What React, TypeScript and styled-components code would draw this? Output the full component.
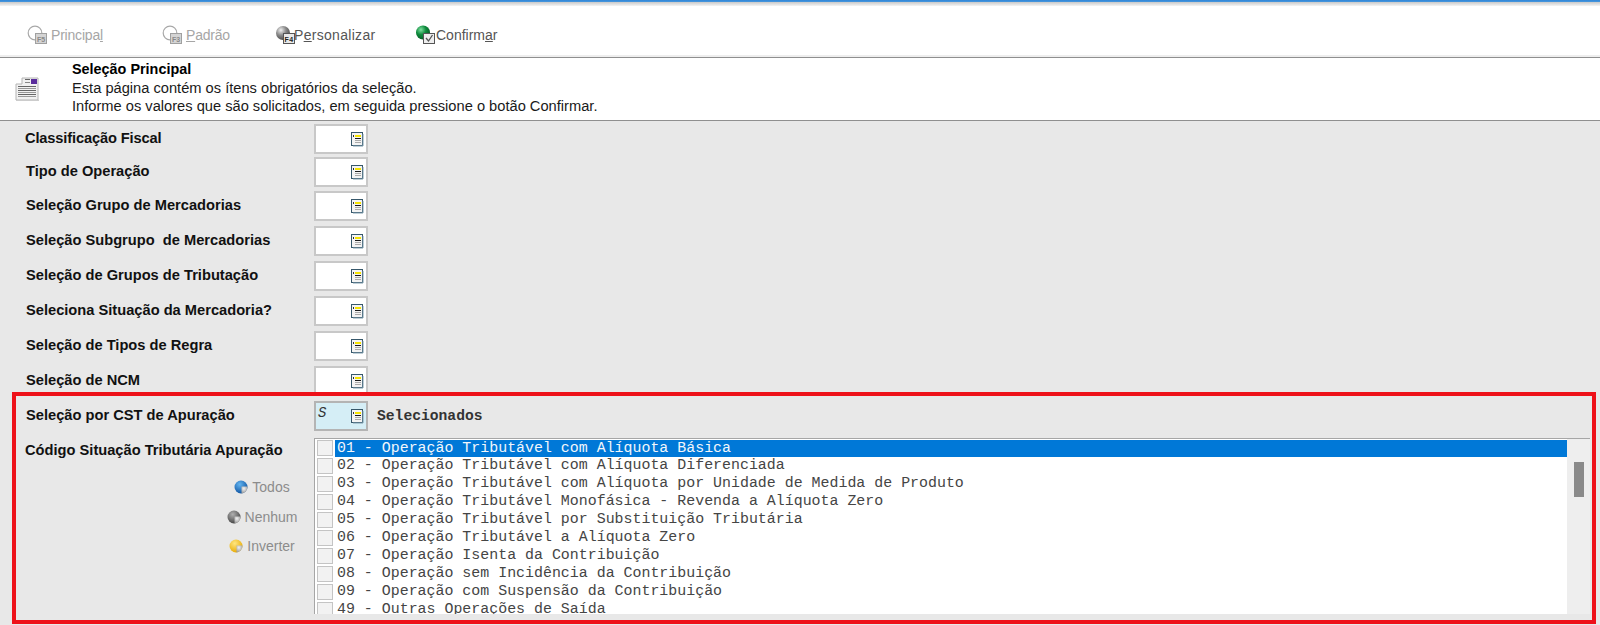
import React from "react";
import styled, { createGlobalStyle } from "styled-components";

const Global = createGlobalStyle`
  html, body { margin: 0; padding: 0; background: #e8e8e8; }
  body { font-family: "Liberation Sans", Arial, sans-serif; overflow: hidden; }
`;

const Page = styled.div`
  position: relative;
  width: 1600px;
  height: 625px;
  overflow: hidden;
  background: #e8e8e8;
`;

const TopStripe = styled.div`
  height: 6px;
  background: linear-gradient(#2f86d8 0, #4a97dc 2px, #c9c9c9 2px, #f4f4f4 6px);
`;

const Toolbar = styled.div`
  height: 49px;
  background: #fff;
  display: flex;
  align-items: center;
  padding: 9px 0 0 27px;
  box-sizing: border-box;
`;

const ToolButton = styled.div<{ $w: number; $off?: boolean; $ls?: number }>`
  width: ${(p) => p.$w}px;
  display: flex;
  align-items: center;
  font-size: 14px;
  letter-spacing: ${(p) => p.$ls ?? -0.2}px;
  color: ${(p) => (p.$off ? "#a6a6a6" : "#555")};
  u { text-underline-offset: 1px; }
`;

const ToolLabel = styled.span<{ $gap?: number }>`
  margin-left: ${(p) => p.$gap ?? 3}px;
`;

const HeaderBand = styled.div`
  height: 66px;
  background: #fff;
  box-sizing: border-box;
  border-top: 3px solid;
  border-image: linear-gradient(#eee 0, #eee 2px, #8f8f8f 2px) 3;
  border-bottom: 1px solid #8f8f8f;
  display: flex;
`;

const HeaderIconBox = styled.div`
  width: 72px;
  padding: 18px 0 0 15px;
  box-sizing: border-box;
`;

const HeaderText = styled.div`
  font-size: 14.67px;
  line-height: 18px;
  color: #1a1a1a;
  padding-top: 2px;
`;

const HeaderTitle = styled.div`
  font-weight: 700;
  font-size: 14.4px;
  color: #000;
  margin-bottom: 1px;
`;

const Body = styled.div`
  padding: 3px 0 0 0;
`;

const Row = styled.div<{ $h: number }>`
  height: ${(p) => p.$h}px;
  display: flex;
  align-items: flex-start;
`;

const Label = styled.div<{ $x?: number; $ls?: number }>`
  width: 314px;
  box-sizing: border-box;
  padding: 6px 0 0 ${(p) => p.$x ?? 26}px;
  font-size: 14.67px;
  line-height: 16px;
  font-weight: 700;
  letter-spacing: ${(p) => p.$ls ?? 0}px;
  color: #111;
  white-space: pre;
`;

const Field = styled.div<{ $on?: boolean }>`
  width: 54px;
  height: 30px;
  box-sizing: border-box;
  border: 2px solid ${(p) => (p.$on ? "#b4b4b4" : "#c8c8c8")};
  background: ${(p) => (p.$on ? "#d5eef6" : "#fff")};
  display: flex;
  justify-content: space-between;
  align-items: center;
  padding: 0 2px 0 2px;
`;

const FieldValue = styled.span`
  font-family: "Liberation Mono", monospace;
  font-size: 14px;
  font-style: italic;
  color: #333;
  margin-top: -6px;
`;

const FieldIconSlot = styled.span`
  margin-left: auto;
  display: flex;
`;

const ValueText = styled.div`
  margin-left: 9px;
  padding-top: 6px;
  font-family: "Liberation Mono", monospace;
  font-size: 14.67px;
  font-weight: 700;
  line-height: 18px;
  color: #333;
`;

const ListSection = styled.div`
  display: flex;
  align-items: flex-start;
`;

const LeftColumn = styled.div`
  width: 314px;
`;

const ListLabel = styled(Label)`
  padding-top: 0;
  margin-top: 4px;
  width: 314px;
`;

const ActionStack = styled.div`
  display: flex;
  flex-direction: column;
  align-items: center;
  width: 96px;
  margin: 21px 0 0 214px;
  gap: 13.5px;
`;

const ActionButton = styled.div`
  display: flex;
  align-items: center;
  gap: 4px;
  height: 16px;
  font-size: 14px;
  color: #8c8c8c;
`;

const ListBox = styled.div`
  width: 1276px;
  height: 176px;
  display: flex;
  box-sizing: border-box;
  border-top: 1px solid #a6a6a6;
  border-left: 1px solid #a6a6a6;
  background: #fff;
  overflow: hidden;
`;

const ListRows = styled.div`
  width: 1252px;
`;

const ListRow = styled.div`
  height: 18px;
  display: flex;
  align-items: stretch;
`;

const Check = styled.div`
  width: 16px;
  height: 16px;
  margin: 1px 2px 0 2px;
  flex: none;
  box-sizing: border-box;
  border: 1px solid #c4c4c4;
  background: #f2f2f2;
`;

const RowText = styled.div<{ $sel?: boolean }>`
  flex: 1;
  margin-top: ${(p) => (p.$sel ? 1 : 0)}px;
  height: ${(p) => (p.$sel ? 17 : 18)}px;
  padding-left: 2px;
  font-family: "Liberation Mono", monospace;
  font-size: 14.93px;
  line-height: 17px;
  white-space: pre;
  color: ${(p) => (p.$sel ? "#f2f6fb" : "#454545")};
  background: ${(p) => (p.$sel ? "#0078d7" : "transparent")};
`;

const ScrollTrack = styled.div`
  width: 23px;
  background: #eeeeee;
  padding: 23px 6px 0 7px;
  box-sizing: border-box;
`;

const ScrollThumb = styled.div`
  width: 10px;
  height: 35px;
  background: #8a8a8a;
`;

const RedFrame = styled.div`
  position: absolute;
  left: 12px;
  top: 392px;
  width: 1584px;
  height: 232px;
  box-sizing: border-box;
  border: 4px solid #ee1119;
  pointer-events: none;
`;

const ListIcon = () => (
  <svg width="13" height="15" viewBox="0 0 13 15">
    <rect x="0.5" y="0.5" width="11" height="13" fill="#f4f4f4" stroke="#36576a" />
    <path d="M12 2v12H2" fill="none" stroke="#7d9bab" />
    <rect x="4" y="3" width="6" height="2" fill="#f6e400" />
    <rect x="2" y="3" width="1" height="2" fill="#333" />
    <rect x="4" y="6" width="6" height="1" fill="#1a1a1a" />
    <rect x="4" y="8" width="6" height="1" fill="#aaa" />
    <rect x="4" y="10" width="6" height="1" fill="#aaa" />
  </svg>
);

const PageIcon = () => (
  <svg width="25" height="26" viewBox="0 0 25 26">
    <path d="M1 8h6V2h16v22H1z" fill="#f1f1f1" stroke="#b4b4b4" />
    <rect x="16" y="3" width="6" height="5" fill="#5a2c9c" />
    <rect x="10" y="3" width="5" height="1" fill="#666" />
    <rect x="10" y="6" width="5" height="1" fill="#888" />
    {[10, 12, 14, 16, 18, 20].map((y) => (
      <rect key={y} x="3" y={y} width="18" height="1" fill={y % 4 ? "#666" : "#999"} />
    ))}
    <rect x="1" y="24" width="23" height="1" fill="#ccc" />
  </svg>
);

const ToolIcon = ({ id, off, color, dark, keyName }: { id: string; off?: boolean; color?: string; dark?: string; keyName: string }) => (
  <svg width="21" height="20" viewBox="0 0 21 20">
    <defs>
      <radialGradient id={id} cx="0.35" cy="0.3" r="0.8">
        <stop offset="0" stopColor="#f0f0f0" />
        <stop offset="0.45" stopColor={color} />
        <stop offset="1" stopColor={dark} />
      </radialGradient>
    </defs>
    {off ? (
      <circle cx="8" cy="8" r="6.8" fill="#fff" stroke="#a8a8a8" strokeWidth="1.2" />
    ) : (
      <circle cx="8" cy="8" r="7" fill={`url(#${id})`} />
    )}
    <rect x="8.5" y="8.5" width="11" height="10" fill={off ? "#d4d4d4" : "#e8e8e8"} stroke={off ? "#a0a0a0" : "#555"} />
    <text x="14" y="16.5" textAnchor="middle" fontFamily="Liberation Sans" fontSize="7" fontWeight="700" fill={off ? "#8a8a8a" : "#222"}>
      {keyName}
    </text>
  </svg>
);

const CheckIcon = () => (
  <svg width="21" height="20" viewBox="0 0 21 20">
    <defs>
      <radialGradient id="cg" cx="0.35" cy="0.3" r="0.8">
        <stop offset="0" stopColor="#7fe0a0" />
        <stop offset="0.45" stopColor="#0d8a3c" />
        <stop offset="1" stopColor="#05501f" />
      </radialGradient>
    </defs>
    <circle cx="8" cy="7.5" r="7" fill="url(#cg)" />
    <rect x="8.5" y="8.5" width="11" height="10" fill="#eee" stroke="#555" />
    <path d="M11 13l2.5 3 4-6" fill="none" stroke="#555" strokeWidth="1.3" />
  </svg>
);

const Ball = ({ id, c1, c2 }: { id: string; c1: string; c2: string }) => (
  <svg width="14" height="14" viewBox="0 0 14 14">
    <defs>
      <radialGradient id={id} cx="0.4" cy="0.3" r="0.75">
        <stop offset="0" stopColor={c1} />
        <stop offset="1" stopColor={c2} />
      </radialGradient>
      <radialGradient id={`${id}g`} cx="0.4" cy="0.3" r="0.8">
        <stop offset="0" stopColor="#f2f2f2" />
        <stop offset="1" stopColor="#8e8e8e" />
      </radialGradient>
    </defs>
    <circle cx="7" cy="7" r="6.5" fill={`url(#${id})`} />
    <path d="M7.5 6.5h6a6.5 6.5 0 0 1-6 6.9z" fill={`url(#${id}g)`} />
  </svg>
);

const fields: { label: string; h: number; x?: number; ls?: number }[] = [
  { label: "Classificação Fiscal", h: 33, x: 25, ls: -0.15 },
  { label: "Tipo de Operação", h: 34 },
  { label: "Seleção Grupo de Mercadorias", h: 35 },
  { label: "Seleção Subgrupo  de Mercadorias", h: 35 },
  { label: "Seleção de Grupos de Tributação", h: 35 },
  { label: "Seleciona Situação da Mercadoria?", h: 35 },
  { label: "Seleção de Tipos de Regra", h: 35 },
  { label: "Seleção de NCM", h: 35 },
];

const items = [
  "01 - Operação Tributável com Alíquota Básica",
  "02 - Operação Tributável com Alíquota Diferenciada",
  "03 - Operação Tributável com Alíquota por Unidade de Medida de Produto",
  "04 - Operação Tributável Monofásica - Revenda a Alíquota Zero",
  "05 - Operação Tributável por Substituição Tributária",
  "06 - Operação Tributável a Alíquota Zero",
  "07 - Operação Isenta da Contribuição",
  "08 - Operação sem Incidência da Contribuição",
  "09 - Operação com Suspensão da Contribuição",
  "49 - Outras Operações de Saída",
];

export default function App() {
  return (
    <Page>
      <Global />
      <TopStripe />
      <Toolbar>
        <ToolButton $w={135} $off>
          <ToolIcon id="a" off keyName="F5" color="#fff" dark="#fff" />
          <ToolLabel>Principa<u>l</u></ToolLabel>
        </ToolButton>
        <ToolButton $w={113} $off>
          <ToolIcon id="b" off keyName="F3" color="#fff" dark="#fff" />
          <ToolLabel><u>P</u>adrão</ToolLabel>
        </ToolButton>
        <ToolButton $w={140} $ls={0.3}>
          <ToolIcon id="c" keyName="F4" color="#8a8a8a" dark="#3c3c3c" />
          <ToolLabel $gap={-2}>P<u>e</u>rsonalizar</ToolLabel>
        </ToolButton>
        <ToolButton $w={120} $ls={0}>
          <CheckIcon />
          <ToolLabel $gap={0}>Confirm<u>a</u>r</ToolLabel>
        </ToolButton>
      </Toolbar>
      <HeaderBand>
        <HeaderIconBox>
          <PageIcon />
        </HeaderIconBox>
        <HeaderText>
          <HeaderTitle>Seleção Principal</HeaderTitle>
          <div>Esta página contém os ítens obrigatórios da seleção.</div>
          <div>Informe os valores que são solicitados, em seguida pressione o botão Confirmar.</div>
        </HeaderText>
      </HeaderBand>
      <Body>
        {fields.map((f) => (
          <Row key={f.label} $h={f.h}>
            <Label $x={f.x} $ls={f.ls}>{f.label}</Label>
            <Field>
              <FieldIconSlot>
                <ListIcon />
              </FieldIconSlot>
            </Field>
          </Row>
        ))}
        <Row $h={37}>
          <Label>Seleção por CST de Apuração</Label>
          <Field $on>
            <FieldValue>S</FieldValue>
            <FieldIconSlot>
              <ListIcon />
            </FieldIconSlot>
          </Field>
          <ValueText>Selecionados</ValueText>
        </Row>
        <ListSection>
          <LeftColumn>
            <ListLabel $x={25}>Código Situação Tributária Apuração</ListLabel>
            <ActionStack>
              <ActionButton>
                <Ball id="t" c1="#62b4f0" c2="#0a4f9e" />
                Todos
              </ActionButton>
              <ActionButton>
                <Ball id="n" c1="#b0b0b0" c2="#3f3f3f" />
                Nenhum
              </ActionButton>
              <ActionButton>
                <Ball id="i" c1="#ffe680" c2="#e6a800" />
                Inverter
              </ActionButton>
            </ActionStack>
          </LeftColumn>
          <ListBox>
            <ListRows>
              {items.map((t, i) => (
                <ListRow key={t}>
                  <Check />
                  <RowText $sel={i === 0}>{t}</RowText>
                </ListRow>
              ))}
            </ListRows>
            <ScrollTrack>
              <ScrollThumb />
            </ScrollTrack>
          </ListBox>
        </ListSection>
      </Body>
      <RedFrame />
    </Page>
  );
}
